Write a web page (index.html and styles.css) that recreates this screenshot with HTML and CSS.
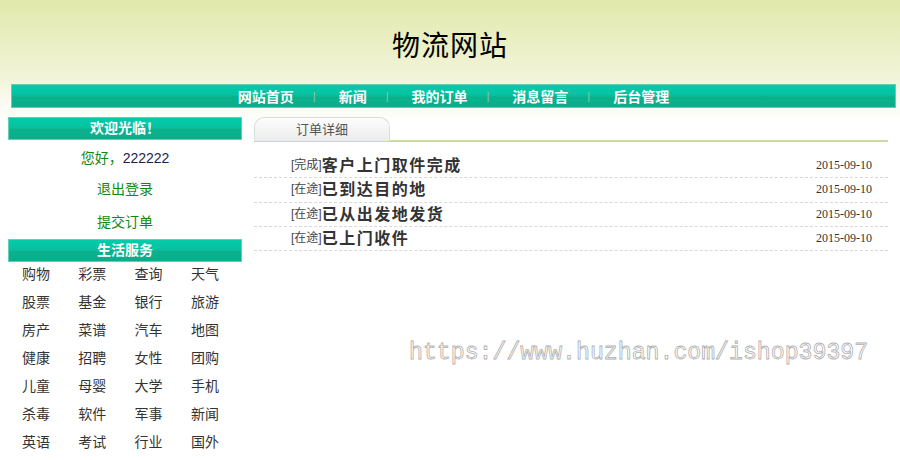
FILE: index.html
```html
<!DOCTYPE html>
<html>
<head>
    <meta charset="utf-8">
    <title>物流网站</title>
    <link rel="stylesheet" href="styles.css">
</head>
<body>
    <div class="top">
        <h1 class="site-title">物流网站</h1>
        <div class="nav">
            <a href="#">网站首页</a>
            <span class="sep">|</span>
            <a href="#">新闻</a>
            <span class="sep">|</span>
            <a href="#">我的订单</a>
            <span class="sep">|</span>
            <a href="#">消息留言</a>
            <span class="sep">|</span>
            <a href="#">后台管理</a>
        </div>
    </div>

    <div class="main">
        <div class="side">
            <div class="bar">欢迎光临！</div>
            <div class="user">
                <p>您好，<span class="uname">222222</span></p>
                <p><a href="#">退出登录</a></p>
                <p><a href="#">提交订单</a></p>
            </div>
            <div class="bar">生活服务</div>
            <ul class="links">
                <li>购物</li><li>彩票</li><li>查询</li><li>天气</li>
                <li>股票</li><li>基金</li><li>银行</li><li>旅游</li>
                <li>房产</li><li>菜谱</li><li>汽车</li><li>地图</li>
                <li>健康</li><li>招聘</li><li>女性</li><li>团购</li>
                <li>儿童</li><li>母婴</li><li>大学</li><li>手机</li>
                <li>杀毒</li><li>软件</li><li>军事</li><li>新闻</li>
                <li>英语</li><li>考试</li><li>行业</li><li>国外</li>
            </ul>
        </div>

        <div class="content">
            <div class="tabs">
                <div class="tab">订单详细</div>
            </div>
            <ul class="orders">
                <li><span class="state">[完成]</span><span class="title">客户上门取件完成</span><span class="date">2015-09-10</span></li>
                <li><span class="state">[在途]</span><span class="title">已到达目的地</span><span class="date">2015-09-10</span></li>
                <li><span class="state">[在途]</span><span class="title">已从出发地发货</span><span class="date">2015-09-10</span></li>
                <li><span class="state">[在途]</span><span class="title">已上门收件</span><span class="date">2015-09-10</span></li>
            </ul>
        </div>
    </div>

    <div class="mark">https://www.huzhan.com/ishop39397</div>
</body>
</html>
```

FILE: styles.css
```css
body {
    margin: 0;
    font-family: "Liberation Sans", "Noto Sans CJK SC", sans-serif;
    font-size: 14px;
    color: #333;
    background: #fff;
}

a {
    text-decoration: none;
}

.top {
    height: 117px;
    background: linear-gradient(#e1e9ab, #f3f5dc 70%, #fbfbf4 88%, #fdfdf9);
    overflow: hidden;
}

.site-title {
    margin: 0;
    height: 84px;
    line-height: 94px;
    text-align: center;
    font-size: 28px;
    font-weight: normal;
    color: #000;
    font-family: "Liberation Serif", "Noto Sans CJK SC", serif;
    letter-spacing: 1px;
}

.nav {
    margin: 0 4px 0 11px;
    height: 22px;
    border: 1px solid #5fd2b4;
    background: linear-gradient(#04cbab, #07c1a0 45%, #0bb18d 55%, #0aad8a);
    display: flex;
    justify-content: center;
    align-items: center;
}

.nav a {
    color: #fff;
    font-weight: bold;
    font-size: 14px;
}

.nav .sep {
    color: #8fc7a8;
    font-size: 11px;
    padding: 0 23px 0 19px;
}

.main {
    display: flex;
    gap: 12px;
    padding-left: 8px;
}

.side {
    width: 234px;
}

.bar {
    height: 21px;
    line-height: 21px;
    border: 1px solid #5fd2b4;
    background: linear-gradient(#04cbab, #07c1a0 45%, #0bb18d 55%, #0aad8a);
    color: #fff;
    font-weight: bold;
    text-align: center;
}

.user {
    padding: 2px 0 0;
    text-align: center;
    color: #118811;
}

.user p {
    margin: 0;
    height: 33px;
    line-height: 33px;
}

.user p:first-child {
    height: 31px;
}

.user a {
    color: #118811;
}

.uname {
    color: #1b2448;
}

.links {
    list-style: none;
    margin: 0;
    padding: 0 0 0 14px;
    display: grid;
    grid-template-columns: repeat(4, 56.3px);
    row-gap: 4px;
}

.links li {
    line-height: 24px;
    color: #333;
}

.content {
    width: 634px;
}

.tabs {
    border-bottom: 2px solid #c8dc9c;
    height: 23px;
}

.tab {
    width: 134px;
    height: 23px;
    line-height: 23px;
    border: 1px solid #dcdcdc;
    border-bottom: none;
    border-radius: 10px 10px 0 0;
    background: linear-gradient(#fdfdfd, #ececec);
    text-align: center;
    color: #555;
    font-size: 13px;
}

.orders {
    list-style: none;
    margin: 0;
    padding: 12px 0 0;
}

.orders li {
    height: 23.3px;
    line-height: 23px;
    border-bottom: 1px dashed #d8d8d8;
    padding: 0 16px 0 37px;
    display: flex;
    align-items: center;
}

.state {
    font-size: 12px;
    color: #444;
}

.title {
    font-size: 16px;
    font-weight: bold;
    color: #333;
    letter-spacing: 1.5px;
}

.date {
    margin-left: auto;
    font-size: 12px;
    color: #333;
    font-family: "Liberation Serif", serif;
}

/* outlined url stamped over the page */
.mark {
    position: absolute;
    left: 409px;
    top: 338px;
    font-family: "Liberation Mono", monospace;
    font-size: 23.2px;
    line-height: 30px;
    color: #fff;
    -webkit-text-stroke: 0.8px #b0b0b0;
    white-space: nowrap;
}
```
